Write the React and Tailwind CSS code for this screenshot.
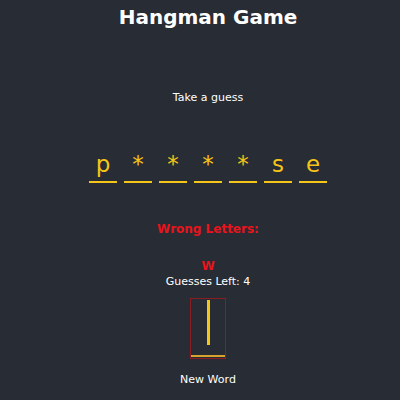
export default function App() {
  const word = ['p', '*', '*', '*', '*', 's', 'e'];

  return (
    <div className="min-h-screen w-full bg-[#282c34] pl-4 text-white" style={{ fontFamily: '"DejaVu Sans", Verdana, sans-serif' }}>
      <div className="flex flex-col items-center">
        <h1 className="pt-[5px] text-[20px] font-bold leading-6">Hangman Game</h1>
        <p className="mt-[61px] text-[11px] leading-4">Take a guess</p>
        <div className="mt-[43px] flex gap-[7px]">
          {word.map((ch, i) => (
            <div key={i} className="flex w-[28px] flex-col items-center">
              <span className="text-[23px] leading-[30px] text-[#f5c518]">{ch}</span>
              <span className="mt-[2px] h-[1.5px] w-full bg-[#f5c518]" />
            </div>
          ))}
        </div>
        <p className="mt-[36px] text-[12px] font-bold leading-5 text-[#e8141c]">Wrong Letters:</p>
        <p className="mt-[19px] text-[12px] font-bold leading-4 text-[#e8141c]">W</p>
        <p className="text-[11px] leading-4">Guesses Left: 4</p>
        <div className="mt-[8px] flex h-[61px] w-[36px] flex-col items-center justify-between border border-[#8b1c22] pt-[1px] pb-[1px]">
          <span className="h-[45px] w-[3px] bg-[#f5c518]" />
          <span className="h-[2px] w-full bg-[#d4a52a]" />
        </div>
        <p className="mt-[13px] text-[11px] leading-4">New Word</p>
      </div>
    </div>
  );
}
